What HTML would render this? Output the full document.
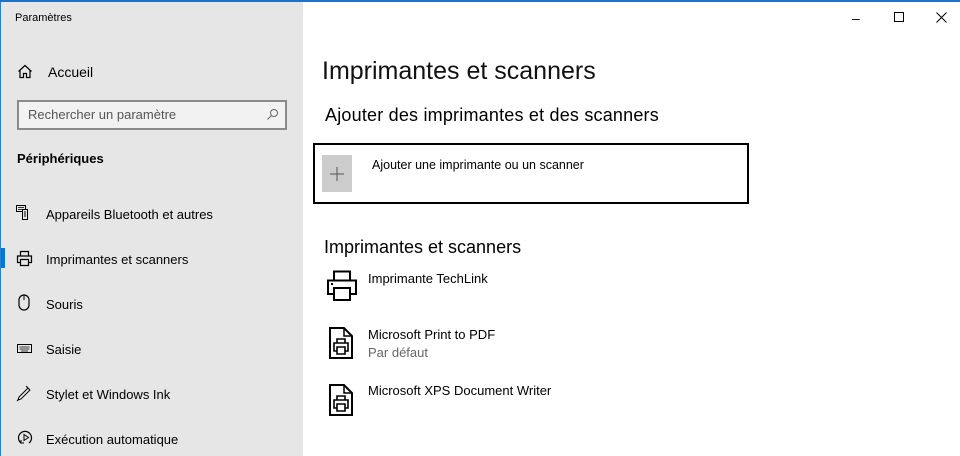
<!DOCTYPE html>
<html><head><meta charset="utf-8"><style>
*{margin:0;padding:0;box-sizing:border-box}
body{width:960px;height:456px;overflow:hidden;background:#fff;font-family:"Liberation Sans",sans-serif;color:#000;position:relative}
.topbar{position:absolute;left:0;top:0;width:960px;height:2px;background:#1a73c8}
.leftb{position:absolute;left:0;top:2px;width:1px;height:454px;background:#2a7fd0}
.side{position:absolute;left:1px;top:2px;width:302px;height:454px;background:#e6e6e6}
.t{position:absolute;white-space:nowrap}
.nav{position:absolute;left:46px;font-size:13px;color:#000}
.ic{position:absolute;left:16px}
.search{position:absolute;left:17px;top:100px;width:270px;height:30px;border:2px solid #8a8a8a;background:#f2f2f2}
.sel{position:absolute;left:1px;top:248px;width:4px;height:20px;background:#0078d7}
.box{position:absolute;left:313px;top:143px;width:436px;height:61px;border:2px solid #000}
.plus{position:absolute;left:7px;top:10px;width:30px;height:37px;background:#cccccc}
</style></head><body>
<div class="topbar"></div>
<div class="side"></div>
<div class="leftb"></div>
<div class="t" style="left:15px;top:12px;font-size:11px">Paramètres</div>
<svg class="ic" style="left:17px;top:64px" width="16" height="15" viewBox="0 0 16 15"><path d="M1.5 7.5L8 1.5l6.5 6M3 6.5v7h3.5v-4h3v4H13v-7" fill="none" stroke="#000" stroke-width="1.2"/></svg>
<div class="nav" style="left:48px;top:64px;font-size:14px">Accueil</div>
<div class="search"><span class="t" style="left:9px;top:5px;font-size:13px;color:#555">Rechercher un paramètre</span>
<svg style="position:absolute;right:6px;top:6px" width="13" height="13" viewBox="0 0 13 13"><circle cx="8" cy="5" r="3.5" fill="none" stroke="#666"/><path d="M5.5 7.5L1.5 11.5" stroke="#666"/></svg></div>
<div class="t" style="left:17px;top:151px;font-size:13px;font-weight:bold">Périphériques</div>
<svg class="ic" style="top:205px" width="18" height="16" viewBox="0 0 18 16"><rect x="0.5" y="0.5" width="9" height="6" fill="none" stroke="#000"/><path d="M2 2.5h6M2 4.5h6" stroke="#000" stroke-width=".7"/><rect x="6.5" y="4.5" width="5" height="10" fill="#e6e6e6" stroke="#000"/><path d="M8 7h2M8 9h2M8 11h2" stroke="#000"/></svg>
<div class="nav" style="top:207px">Appareils Bluetooth et autres</div>
<div class="sel"></div>
<svg class="ic" style="top:250px" width="17" height="17" viewBox="0 0 17 17"><path d="M4.5 6V1.5h8V6M4.5 12.5h-3v-6.5h14v6.5h-3M4.5 9.5h8v6h-8z" fill="none" stroke="#000" stroke-width="1.2"/></svg>
<div class="nav" style="top:252px">Imprimantes et scanners</div>
<svg class="ic" style="left:18px;top:294px" width="12" height="17" viewBox="0 0 12 17"><rect x="1" y="1" width="10" height="15" rx="5" fill="none" stroke="#000" stroke-width="1.2"/><path d="M6 1v5" stroke="#000"/></svg>
<div class="nav" style="top:297px">Souris</div>
<svg class="ic" style="left:17px;top:344px" width="16" height="10" viewBox="0 0 16 10"><rect x=".5" y=".5" width="14" height="8" fill="none" stroke="#000"/><path d="M2.5 3h10M2.5 5h10M4 7h7" stroke="#000" stroke-width=".8"/></svg>
<div class="nav" style="top:342px">Saisie</div>
<svg class="ic" style="left:16px;top:385px" width="16" height="17" viewBox="0 0 16 17"><path d="M2 15l3-1 9-9-2-2-9 9zM1 16l2-2M10 1l4 4" fill="none" stroke="#000"/></svg>
<div class="nav" style="top:387px">Stylet et Windows Ink</div>
<svg class="ic" style="left:17px;top:429px" width="17" height="17" viewBox="0 0 17 17"><path d="M4 14A6.5 6.5 0 1 1 12 14" fill="none" stroke="#000" stroke-width="1.2"/><path d="M7 5.5v6l4.5-3z" fill="none" stroke="#000"/><path d="M4 11v3h3" fill="none" stroke="#000"/></svg>
<div class="nav" style="top:432px">Exécution automatique</div>

<div class="t" style="left:852px;top:10px;font-size:14px">&#8211;</div>
<div style="position:absolute;left:894px;top:12px;width:10px;height:10px;border:1px solid #000"></div>
<svg style="position:absolute;left:936px;top:12px" width="11" height="11"><path d="M.5.5l10 10M10.5.5l-10 10" stroke="#000"/></svg>

<div class="t" style="left:322px;top:57px;font-size:25px;letter-spacing:0px;color:#111">Imprimantes et scanners</div>
<div class="t" style="left:325px;top:105px;font-size:18px;letter-spacing:.2px">Ajouter des imprimantes et des scanners</div>
<div class="box"><div class="plus"><svg style="position:absolute;left:8px;top:12px" width="14" height="14"><path d="M7 0v14M0 7h14" stroke="#555"/></svg></div>
<div class="t" style="left:57px;top:13px;font-size:12.5px">Ajouter une imprimante ou un scanner</div></div>

<div class="t" style="left:324px;top:237px;font-size:18px">Imprimantes et scanners</div>
<svg style="position:absolute;left:326px;top:270px" width="32" height="32" viewBox="0 0 32 32"><path d="M8 10V1.5h16V10M8 24H2V10.5h28V24h-6M8 18h16v12H8z" fill="none" stroke="#000" stroke-width="2"/><rect x="5" y="13" width="2" height="2"/></svg>
<div class="t" style="left:368px;top:271px;font-size:13px">Imprimante TechLink</div>
<svg style="position:absolute;left:329px;top:327px" width="24" height="32" viewBox="0 0 24 32"><path d="M1 1h14l8 8v22H1z" fill="none" stroke="#000" stroke-width="2"/><path d="M15 1v8h8" fill="none" stroke="#000" stroke-width="1.5"/><path d="M8 16v-4h8v4M8 24H5v-8h14v8h-3M8 20h8v7H8z" fill="none" stroke="#000" stroke-width="1.6"/></svg>
<div class="t" style="left:368px;top:327px;font-size:13px">Microsoft Print to PDF</div>
<div class="t" style="left:368px;top:345px;font-size:13px;color:#666">Par défaut</div>
<svg style="position:absolute;left:329px;top:384px" width="24" height="32" viewBox="0 0 24 32"><path d="M1 1h14l8 8v22H1z" fill="none" stroke="#000" stroke-width="2"/><path d="M15 1v8h8" fill="none" stroke="#000" stroke-width="1.5"/><path d="M8 16v-4h8v4M8 24H5v-8h14v8h-3M8 20h8v7H8z" fill="none" stroke="#000" stroke-width="1.6"/></svg>
<div class="t" style="left:368px;top:383px;font-size:13px">Microsoft XPS Document Writer</div>
</body></html>
